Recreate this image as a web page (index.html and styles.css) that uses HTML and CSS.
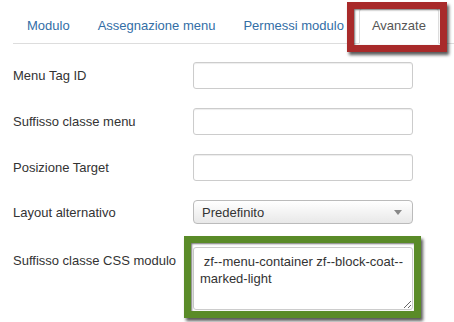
FILE: index.html
```html
<!DOCTYPE html>
<html lang="it">
<head>
  <meta charset="UTF-8">
  <title>Modulo - Avanzate</title>
  <link rel="stylesheet" href="styles.css">
</head>
<body>
  <ul class="tabs">
    <li><a href="#">Modulo</a></li>
    <li><a href="#">Assegnazione menu</a></li>
    <li><a href="#">Permessi modulo</a></li>
    <li class="active"><a href="#">Avanzate</a><span class="mark mark-red"></span></li>
  </ul>

  <div class="form">
    <div class="row">
      <label for="tag-id">Menu Tag ID</label>
      <input type="text" id="tag-id">
    </div>
    <div class="row">
      <label for="class-sfx">Suffisso classe menu</label>
      <input type="text" id="class-sfx">
    </div>
    <div class="row">
      <label for="target">Posizione Target</label>
      <input type="text" id="target">
    </div>
    <div class="row">
      <label for="layout">Layout alternativo</label>
      <div class="select-wrap">
        <select id="layout">
          <option>Predefinito</option>
        </select>
      </div>
    </div>
    <div class="row row-top">
      <label for="module-sfx">Suffisso classe CSS modulo</label>
      <div class="area-wrap">
        <textarea id="module-sfx"> zf--menu-container zf--block-coat--marked-light</textarea>
        <span class="mark mark-green"></span>
      </div>
    </div>
  </div>
</body>
</html>
```

FILE: styles.css
```css
body {
  margin: 0;
  font-family: "Liberation Sans", Arial, sans-serif;
  font-size: 13px;
  color: #333;
  background: #fff;
}

/* tabs */
.tabs {
  list-style: none;
  display: flex;
  margin: 0 0 0 13px;
  padding: 8px 0 0 1px;
  border-bottom: 1px solid #ddd;
}

.tabs li {
  position: relative;
  margin: 0 2px -1px 0;
}

.tabs a {
  display: block;
  padding: 8px 12px;
  line-height: 18px;
  border: 1px solid transparent;
  border-radius: 4px 4px 0 0;
  color: #336ea6;
  text-decoration: none;
}

.tabs .active a {
  color: #555;
  background: #fff;
  border-color: #ddd #ddd transparent;
}

/* highlight frames */
.mark {
  position: absolute;
  border: 7px solid;
  box-shadow: 2px 3px 3px rgba(0, 0, 0, 0.65), inset 1px 1px 2px rgba(0, 0, 0, 0.55);
  pointer-events: none;
}

.mark-red {
  border-color: #a82a2a;
  top: -6px;
  left: -12px;
  right: -8px;
  bottom: -8px;
}

.mark-green {
  border-color: #5a8b28;
  top: -11px;
  left: -9px;
  right: -8px;
  bottom: -8px;
}

/* form */
.form {
  padding: 18px 0 0 13px;
}

.row {
  display: grid;
  grid-template-columns: 180px 220px;
  align-items: center;
  margin-bottom: 19px;
}

.row-top {
  align-items: start;
  margin-top: 23px;
}

.row-top label {
  padding-top: 5px;
  line-height: 18px;
}

input[type="text"] {
  box-sizing: border-box;
  width: 220px;
  height: 27px;
  margin: 0;
  border: 1px solid #ccc;
  border-radius: 3px;
  box-shadow: inset 0 1px 1px rgba(0, 0, 0, 0.075);
}

.select-wrap {
  position: relative;
  width: 220px;
}

.select-wrap::after {
  content: "";
  position: absolute;
  right: 11px;
  top: 10px;
  border-left: 4px solid transparent;
  border-right: 4px solid transparent;
  border-top: 5px solid #888;
}

select {
  appearance: none;
  -webkit-appearance: none;
  box-sizing: border-box;
  width: 220px;
  height: 24px;
  padding: 0 8px;
  border: 1px solid #bbb;
  border-radius: 4px;
  background: linear-gradient(#fff, #e8e8e8);
  font-family: inherit;
  font-size: 13px;
  color: #333;
}

.area-wrap {
  position: relative;
  width: 220px;
  height: 63px;
}

textarea {
  box-sizing: border-box;
  display: block;
  width: 220px;
  height: 63px;
  margin: 0;
  padding: 5px 6px;
  border: 1px solid #ccc;
  border-radius: 3px;
  font-family: inherit;
  font-size: 13px;
  line-height: 17px;
  color: #333;
}
```
